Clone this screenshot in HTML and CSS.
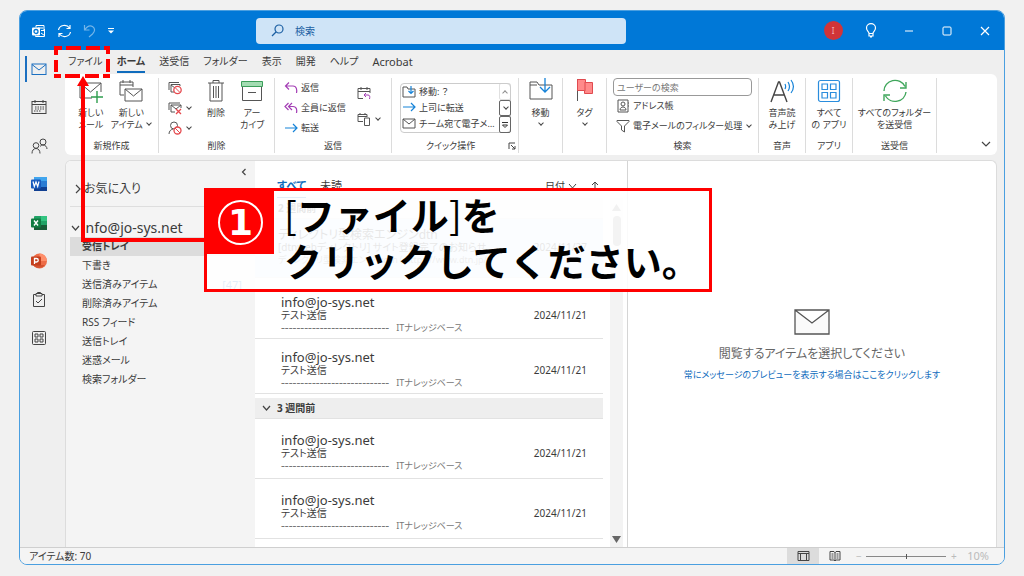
FILE: index.html
```html
<!DOCTYPE html>
<html lang="ja">
<head>
<meta charset="utf-8">
<title>受信トレイ</title>
<link rel="stylesheet" href="styles.css">
</head>
<body>
<div class="window">
  <header class="titlebar">
    <div class="quick">
      <svg class="app-icon" width="14" height="14" viewBox="0 0 14 14"><path d="M4 1.500h8v5M4 1.500v2M12.500 5v7.500h-9v-1M6 4h5M9 6.500h3M9 9l3.500 2.500" fill="none" stroke="#fff"/><rect x="0" y="3.500" width="8" height="8" rx="1" fill="#fff"/><circle cx="4" cy="7.500" r="2" fill="none" stroke="#0078d7" stroke-width="1.300"/></svg>
      <button class="bare" aria-label="すべて送受信"><svg width="15" height="14" viewBox="0 0 15 14" fill="none" stroke="#fff" stroke-width="1.200"><path d="M1.500 6a6 5.500 0 0 1 11-2M13 1v3.500H9.500M13.500 8a6 5.500 0 0 1-11 2M2 13V9.500h3.500"/></svg></button>
      <button class="bare dim" aria-label="元に戻す"><svg width="13" height="14" viewBox="0 0 13 14" fill="none" stroke="#fff" stroke-width="1.200"><path d="M1.500 1v5h5M1.500 6C4 2.500 7 1 9.500 2.500c3 2 2.500 5 0 7.500L6 13"/></svg></button>
      <button class="bare" aria-label="クイック アクセス ツール バーのカスタマイズ"><svg width="8" height="8" viewBox="0 0 8 8"><path d="M1 1.500h6" stroke="#fff"/><path d="M1 3.500h6L4 6.500z" fill="#fff"/></svg></button>
    </div>
    <label class="search">
      <svg width="13" height="13" viewBox="0 0 13 13" fill="none" stroke="#1b5fa3" stroke-width="1.200"><circle cx="8" cy="5" r="4"/><path d="M5 8L1 12"/></svg>
      <input type="search" placeholder="検索" aria-label="検索">
    </label>
    <div class="system">
      <button class="bare" aria-label="アカウント"><span class="avatar">I</span></button>
      <button class="bare" aria-label="ヒント"><svg width="12" height="15" viewBox="0 0 12 15" fill="none" stroke="#fff" stroke-width="1.200"><path d="M4 10.500C4 8.500 1.500 8 1.500 5a4.500 4.300 0 0 1 9 0c0 3-2.500 3.500-2.500 5.500zM4 10.500v2.500h4v-2.500M5 14h2"/></svg></button>
      <button class="bare" aria-label="最小化"><svg width="10" height="10" viewBox="0 0 10 10"><path d="M1 5h8" stroke="#fff"/></svg></button>
      <button class="bare" aria-label="最大化"><svg width="10" height="10" viewBox="0 0 10 10"><rect x="1" y="1" width="8" height="8" rx="1" fill="none" stroke="#fff"/></svg></button>
      <button class="bare" aria-label="閉じる"><svg width="10" height="10" viewBox="0 0 10 10"><path d="M1 1l8 8M9 1L1 9" stroke="#fff" stroke-width="1.200"/></svg></button>
    </div>
  </header>

  <div class="body">
    <nav class="rail" aria-label="アプリ">
      <button class="bare current" aria-label="メール"><svg width="16" height="16" viewBox="0 0 16 16" fill="none" stroke="#1b6fc0"><rect x="1" y="3" width="14" height="10.500"/><path d="M1 3.500l7 5.500 7-5.500"/></svg></button>
      <button class="bare" aria-label="予定表"><svg width="16" height="16" viewBox="0 0 16 16" fill="none" stroke="#444"><rect x="1" y="2.500" width="14" height="12"/><path d="M1 5.500h14M4 1v3M12 1v3"/><path d="M4 8h9M4 10h9M3 12h7" stroke-dasharray="1.500 1"/></svg></button>
      <button class="bare" aria-label="連絡先"><svg width="17" height="16" viewBox="0 0 17 16" fill="none" stroke="#444"><circle cx="5" cy="7.500" r="2.800"/><circle cx="12" cy="4" r="3"/><path d="M1 15.500c0-3 1.500-5 4-5s4 2 4 5M9 8.500c1-1 2-1.500 3-1.500 2.500 0 4 2 4 4"/></svg></button>
      <button class="bare" aria-label="Word"><svg width="18" height="16" viewBox="0 0 18 16"><rect x="4" y="1" width="13" height="14" rx="1" fill="#2b7cd3"/><path d="M4 1h13v4H4z" fill="#41a5ee"/><path d="M4 11h13v4H4z" fill="#103f91"/><rect x="1" y="3.500" width="10" height="9" rx="1" fill="#185abd"/><path d="M3 5.500l1.300 5L6 6l1.700 4.500 1.300-5" fill="none" stroke="#fff" stroke-width="1.200"/></svg></button>
      <button class="bare" aria-label="Excel"><svg width="18" height="16" viewBox="0 0 18 16"><rect x="4" y="1" width="13" height="14" rx="1" fill="#21a366"/><path d="M11 1h6v5h-6z" fill="#33c481"/><path d="M4 10h13v5H4z" fill="#185c37"/><rect x="1" y="3.500" width="10" height="9" rx="1" fill="#107c41"/><path d="M4 5.500l4 5M8 5.500l-4 5" stroke="#fff" stroke-width="1.400"/></svg></button>
      <button class="bare" aria-label="PowerPoint"><svg width="18" height="16" viewBox="0 0 18 16"><circle cx="9.500" cy="8" r="7.500" fill="#ed6c47"/><path d="M9.500.500A7.500 7.500 0 0 1 17 8H9.500z" fill="#ff8f6b"/><path d="M3 12h12a7.500 7.500 0 0 1-12 0z" fill="#d35230"/><rect x="1" y="3.500" width="10" height="9" rx="1" fill="#c43e1c"/><path d="M4.500 11V5.500h2a1.700 1.700 0 0 1 0 3.500h-2" fill="none" stroke="#fff" stroke-width="1.300"/></svg></button>
      <button class="bare" aria-label="タスク"><svg width="14" height="16" viewBox="0 0 14 16" fill="none" stroke="#444"><path d="M4 2.500H1.500v12h11v-12H10M4 1.500h6v2.500H4zM5.500 1.500v-1h3v1M4 9l2 2 4-4"/></svg></button>
      <button class="bare" aria-label="その他のアプリ"><svg width="16" height="16" viewBox="0 0 16 16" fill="none" stroke="#444"><rect x="1.500" y="1.500" width="13" height="13" rx="1"/><path d="M4 4h3v3H4zM9 4h3v3H9zM4 9h3v3H4zM9 9h3v3H9z"/></svg></button>
    </nav>

    <main class="main">
      <nav class="tabs" aria-label="リボン">
        <button class="tab">ファイル</button><button class="tab active">ホーム</button><button class="tab">送受信</button><button class="tab">フォルダー</button><button class="tab">表示</button><button class="tab">開発</button><button class="tab">ヘルプ</button><button class="tab latin">Acrobat</button>
      </nav>

      <div class="ribbon">
        <section class="group g-new">
          <div class="tools">
            <button class="big"><svg width="26" height="26" viewBox="0 0 26 26" fill="none" stroke="#555"><path d="M14 20H2V5h21v9M2 5l10.500 9L23 5"/><path d="M19 13v12M13 19h12" stroke="#2f9e4f" stroke-width="1.400"/></svg><span>新しい<br>メール</span></button>
            <button class="big"><svg width="26" height="26" viewBox="0 0 26 26" fill="none" stroke="#555"><path d="M6 17H2V4h13v5M2 7h13M5 2v3M12 2v3"/><path d="M7 11h17v12H7zM7 11l8.500 7 8.500-7" fill="#fff"/></svg><span>新しい<br>アイテム <i class="chev"></i></span></button>
          </div>
          <h2>新規作成</h2>
        </section>
        <section class="group g-delete">
          <div class="tools">
            <div class="stack icons">
              <button class="row" aria-label="無視"><svg width="14" height="14" viewBox="0 0 14 14" fill="none" stroke="#555"><path d="M1 9V1.500h10M6 11H3V3.500h9V5M3 4l4 3"/><circle cx="9.500" cy="9" r="3.700" stroke="#e5484d" fill="#fff" stroke-width="1.300"/><path d="M7 6.500l5 5" stroke="#e5484d"/></svg></button>
              <button class="row" aria-label="クリーンアップ"><svg width="14" height="14" viewBox="0 0 14 14" fill="none" stroke="#555"><path d="M1 9V2h11M7 11H3V4h10v3M3 4l5 4 5-4"/><path d="M8 8l5 5M13 8l-5 5" stroke="#e5484d" stroke-width="1.300"/></svg><i class="chev"></i></button>
              <button class="row" aria-label="迷惑メール"><svg width="14" height="14" viewBox="0 0 14 14" fill="none" stroke="#555"><circle cx="6" cy="4.500" r="3.500"/><path d="M1 13c0-3 2-4.500 4-5"/><circle cx="9.500" cy="9.500" r="3.500" stroke="#e5484d" fill="#fff" stroke-width="1.300"/><path d="M7 7l5 5" stroke="#e5484d"/></svg><i class="chev"></i></button>
            </div>
            <button class="big narrow"><svg width="26" height="26" viewBox="0 0 26 26" fill="none" stroke="#555"><path d="M5 5h16M10 5V2.500h6V5M7 5v18h12V5M10.500 8v12M13 8v12M15.500 8v12"/></svg><span>削除</span></button>
            <button class="big narrow"><svg width="26" height="26" viewBox="0 0 26 26"><path d="M3.500 8v14.500h19V8M9 14.500h8" fill="none" stroke="#555"/><path d="M2.500 3.500h21v5h-21z" fill="#a3dcb2" stroke="#3c9e5a"/></svg><span>アー<br>カイブ</span></button>
          </div>
          <h2>削除</h2>
        </section>
        <section class="group g-reply">
          <div class="tools">
            <div class="stack">
              <button class="row"><svg width="14" height="14" viewBox="0 0 14 14" fill="none" stroke="#a43fb5" stroke-width="1.200"><path d="M5 1.500L1.500 5 5 8.500M1.500 5H9c4 0 4 4.500 3.500 7"/></svg>返信</button>
              <button class="row"><svg width="14" height="14" viewBox="0 0 14 14" fill="none" stroke="#a43fb5" stroke-width="1.200"><path d="M4.500 2L1 5.500 4.500 9M8 2L4.500 5.500 8 9M4.500 5.500H9c4 0 4 4 3.500 6.500"/></svg>全員に返信</button>
              <button class="row"><svg width="14" height="14" viewBox="0 0 14 14" fill="none" stroke="#1683d8" stroke-width="1.200"><path d="M1 7h12M9 3l4 4-4 4"/></svg>転送</button>
            </div>
            <div class="stack pair">
              <button class="row" aria-label="会議"><svg width="14" height="14" viewBox="0 0 14 14" fill="none" stroke="#555"><path d="M6 12.500H1v-10h12V7M1 5.500h12M4 1v3M10 1v3"/><path d="M9 7L7 9l2 2M7 9h4c2 0 2 2 1.500 4" stroke="#a43fb5"/></svg></button>
              <button class="row" aria-label="その他"><svg width="14" height="14" viewBox="0 0 14 14" fill="none" stroke="#555"><path d="M6 9.500H1v-7h9V5M1 4.500h9M3 1v2M8 1v2M7.500 6h5v7.500h-5z"/></svg><i class="chev"></i></button>
            </div>
          </div>
          <h2>返信</h2>
        </section>
        <section class="group g-steps">
          <div class="gallery">
            <div class="choices">
              <button class="row"><svg width="14" height="14" viewBox="0 0 14 14" fill="none" stroke="#555"><path d="M1 12V2h4l1 2h7v8z"/><path d="M9 1v7M6.500 6L9 8.500 11.500 6" stroke="#1683d8" stroke-width="1.200"/></svg>移動: ？</button>
              <button class="row"><svg width="14" height="14" viewBox="0 0 14 14" fill="none" stroke="#1683d8" stroke-width="1.200"><path d="M1 6h12M9 2l4 4-4 4"/></svg>上司に転送</button>
              <button class="row"><svg width="14" height="14" viewBox="0 0 14 14" fill="none" stroke="#555"><path d="M1 2h12v9H1zM1 2l6 5 6-5"/></svg>チーム宛て電子メ…</button>
            </div>
            <div class="spin">
              <button class="faint" aria-label="上へ"><i class="chev up"></i></button>
              <button aria-label="下へ"><i class="chev"></i></button>
              <button aria-label="その他"><svg width="8" height="8" viewBox="0 0 8 8" fill="none" stroke="#333"><path d="M1 1.500h6M1.500 4L4 6.500 6.500 4z"/></svg></button>
            </div>
          </div>
          <h2>クイック操作 <svg class="launcher" width="8" height="8" viewBox="0 0 8 8" fill="none" stroke="#444"><path d="M1 7V1h6M3 3l4 4M7 4v3H4"/></svg></h2>
        </section>
        <section class="group g-move">
          <div class="tools"><button class="big"><svg width="26" height="26" viewBox="0 0 26 26" fill="none" stroke="#555"><path d="M2 21V4h7l2 3h13v14zM2 7h7"/><path d="M17 0v13M12 9l5 5 5-5" stroke="#1683d8" stroke-width="1.300"/></svg><span>移動<br><i class="chev"></i></span></button></div>
        </section>
        <section class="group g-tag">
          <div class="tools"><button class="big"><svg width="26" height="26" viewBox="0 0 26 26"><path d="M5.500 1v22" stroke="#555"/><path d="M5.500 1.500h8v3h7v11h-8v-3h-7z" fill="#ff8a8a" stroke="#e04a4f"/><path d="M13 4v9" stroke="#e04a4f"/></svg><span>タグ<br><i class="chev"></i></span></button></div>
        </section>
        <section class="group g-find">
          <div class="stack">
            <input class="people" type="text" placeholder="ユーザーの検索" aria-label="ユーザーの検索">
            <button class="row"><svg width="14" height="14" viewBox="0 0 14 14" fill="none" stroke="#555"><path d="M2 1h10v12H2z"/><circle cx="7" cy="5" r="2"/><path d="M4 11c0-4 6-4 6 0zM12 4h1M12 7h1"/></svg>アドレス帳</button>
            <button class="row"><svg width="14" height="14" viewBox="0 0 14 14" fill="none" stroke="#555"><path d="M1 1.500h12v1L8.500 7v6l-3-2V7L1 2.500z"/></svg>電子メールのフィルター処理 <i class="chev"></i></button>
          </div>
          <h2>検索</h2>
        </section>
        <section class="group g-voice">
          <div class="tools"><button class="big"><svg width="26" height="26" viewBox="0 0 26 26" fill="none"><path d="M2 24L9.500 4h1L18 24M5 17h10" stroke="#444" stroke-width="1.400"/><path d="M16 6c1 2 1 3 0 5M19 4c2 3 2 6 0 9M22 2c3 4 3 9 0 13" stroke="#1683d8" stroke-width="1.200"/></svg><span>音声読<br>み上げ</span></button></div>
          <h2>音声</h2>
        </section>
        <section class="group g-apps">
          <div class="tools"><button class="big"><svg width="26" height="26" viewBox="0 0 26 26" fill="none" stroke="#2a8ddd" stroke-width="1.200"><rect x="2.500" y="2.500" width="21" height="21" rx="2"/><path d="M6 6h5.500v5.500H6zM14.500 6H20v5.500h-5.500zM6 14.500h5.500V20H6zM14.500 14.500H20V20h-5.500z"/></svg><span>すべて<br>の アプリ</span></button></div>
          <h2>アプリ</h2>
        </section>
        <section class="group g-sync">
          <div class="tools"><button class="big"><svg width="26" height="26" viewBox="0 0 26 26" fill="none" stroke="#3fa65b" stroke-width="1.400"><path d="M2 13A11 10.500 0 0 1 23 8.500M24 4v6h-6M24 14A11 10.500 0 0 1 3.500 18M2 23v-6h6"/></svg><span>すべてのフォルダー<br>を送受信</span></button></div>
          <h2>送受信</h2>
        </section>
        <button class="collapse bare" aria-label="リボンの折りたたみ"><svg width="10" height="10" viewBox="0 0 10 10" fill="none" stroke="#444" stroke-width="1.200"><path d="M1 3l4 4 4-4"/></svg></button>
      </div>

      <div class="content">
        <aside class="folders">
          <button class="fold bare" aria-label="折りたたむ"><svg width="6" height="8" viewBox="0 0 6 8" fill="none" stroke="#444" stroke-width="1.200"><path d="M4.500 1l-3 3 3 3"/></svg></button>
          <button class="root fav"><svg width="8" height="10" viewBox="0 0 8 10" fill="none" stroke="#444" stroke-width="1.200"><path d="M2 1l4 4-4 4"/></svg>お気に入り</button>
          <button class="root account"><svg width="9" height="8" viewBox="0 0 9 8" fill="none" stroke="#444" stroke-width="1.200"><path d="M1 2l3.500 4L8 2"/></svg>info@jo-sys.net</button>
          <ul class="tree">
            <li class="selected"><a href="#inbox">受信トレイ</a></li>
            <li><a href="#drafts">下書き</a></li>
            <li><a href="#sent">送信済みアイテム</a><span class="count">[47]</span></li>
            <li><a href="#deleted">削除済みアイテム</a></li>
            <li><a href="#rss">RSS フィード</a></li>
            <li><a href="#outbox">送信トレイ</a></li>
            <li><a href="#junk">迷惑メール</a></li>
            <li><a href="#search">検索フォルダー</a></li>
          </ul>
        </aside>

        <section class="list">
          <div class="filter">
            <button class="bare all">すべて</button>
            <button class="bare">未読</button>
            <button class="bare sort">日付 <svg width="9" height="8" viewBox="0 0 9 8" fill="none" stroke="#444"><path d="M1 2l3.500 4L8 2"/></svg></button>
            <button class="bare" aria-label="昇順"><svg width="8" height="10" viewBox="0 0 8 10" fill="none" stroke="#444"><path d="M4 9V1M1 4l3-3 3 3"/></svg></button>
          </div>
          <div class="scroller">
            <div class="messages">
              <h3 class="week plain">2 週間前</h3>
              <article class="mail picked"><b>ディレクトリ型検索エンジンdtn</b><p>[dtnwebディレクトリ] サイト登録完了のお知らせ</p><time>2024/11/27</time><small>ディレクトリ型検索エンジンdtn（ https://www.dtn.jp/ ）</small></article>
              <div class="set">
                <article class="mail"><b>info@jo-sys.net</b><p>テスト送信</p><time>2024/11/21</time><small><span class="dashes">----------------------------</span>ITナレッジベース</small></article>
                <article class="mail"><b>info@jo-sys.net</b><p>テスト送信</p><time>2024/11/21</time><small><span class="dashes">----------------------------</span>ITナレッジベース</small></article>
              </div>
              <h3 class="week"><svg width="9" height="8" viewBox="0 0 9 8" fill="none" stroke="#444" stroke-width="1.200"><path d="M1 2l3.500 4L8 2"/></svg>3 週間前</h3>
              <div class="set roomy">
                <article class="mail"><b>info@jo-sys.net</b><p>テスト送信</p><time>2024/11/21</time><small><span class="dashes">----------------------------</span>ITナレッジベース</small></article>
                <article class="mail"><b>info@jo-sys.net</b><p>テスト送信</p><time>2024/11/21</time><small><span class="dashes">----------------------------</span>ITナレッジベース</small></article>
              </div>
            </div>
            <div class="bar" aria-hidden="true">
              <svg width="9" height="7" viewBox="0 0 9 7"><path d="M4.500 0L9 7H0z" fill="#888"/></svg>
              <div class="thumb"></div>
              <svg class="down" width="9" height="7" viewBox="0 0 9 7"><path d="M0 0h9L4.500 7z" fill="#666"/></svg>
            </div>
          </div>
        </section>

        <section class="reading">
          <svg width="36" height="26" viewBox="0 0 36 26"><path d="M1 1h34v24H1zM1 1l17 13L35 1" fill="#fafafa" stroke="#555" stroke-width="1.300"/></svg>
          <p>閲覧するアイテムを選択してください</p>
          <a href="#preview">常にメッセージのプレビューを表示する場合はここをクリックします</a>
        </section>
      </div>
    </main>
  </div>

  <footer class="status">
    <span class="items">アイテム数: 70</span>
    <button class="view on" aria-label="標準"><svg width="13" height="12" viewBox="0 0 13 12" fill="none" stroke="#444"><path d="M1 1.500h11v9H1zM1 3.500h11M3.500 3.500v7M9.500 3.500v7"/></svg></button>
    <button class="view" aria-label="閲覧"><svg width="12" height="12" viewBox="0 0 12 12" fill="none" stroke="#444"><path d="M1 1.500h4l1 1 1-1h4v8.500H7l-1 1-1-1H1zM6 2v9M2.500 4h2M2.500 6h2M2.500 8h2M7.500 4h2M7.500 6h2M7.500 8h2"/></svg></button>
    <span class="pm">−</span>
    <input class="zoom" type="range" min="0" max="100" value="50" disabled aria-label="ズーム">
    <span class="pm">+</span>
    <span class="percent">10%</span>
  </footer>

  <svg class="pointer" width="160" height="204" viewBox="0 0 160 204" fill="none" stroke="#f00" stroke-width="4" aria-hidden="true"><path d="M17 5H11v7M11 17v12M21 5h15M41 5h14M59 5h4v6M63 16v13M16 33H9M20 33h15M40 33h14M58 33h7"/><path d="M38 42v155h122"/><path d="M38 33l6 10H32z" fill="#f00" stroke="none"/></svg>
  <aside class="callout">
    <div class="step"><span>1</span></div>
    <p>[<b>ファイル</b>]<b>を<br>クリックしてください。</b></p>
  </aside>
</div>
</body>
</html>
```
FILE: styles.css
```css
* { box-sizing: border-box; }
body {
  margin: 0;
  padding: 10px 19px 11px;
  height: 100vh;
  background: #f1f1f1;
  color: #3b3b3b;
  font-family: "Noto Sans", "Noto Sans CJK JP", sans-serif;
  font-size: 10px;
  line-height: 14px;
  font-feature-settings: "palt";
}
button, input { font: inherit; font-feature-settings: inherit; color: inherit; margin: 0; }
button { padding: 0; border: 0; background: none; white-space: nowrap; }
svg { display: block; flex: none; }
h2, h3, p, ul { margin: 0; padding: 0; font-weight: 400; }
a { color: inherit; text-decoration: none; }
.bare { display: flex; align-items: center; justify-content: center; }

.window {
  position: relative;
  height: 100%;
  display: flex;
  flex-direction: column;
  border: 1px solid #4a9fe0;
  border-radius: 8px;
  background: #efefef;
}

.titlebar {
  flex: none;
  height: 39px;
  display: grid;
  grid-template-columns: 236px minmax(200px, 370px) 1fr;
  align-items: center;
  background: #0078d7;
  border-radius: 7px 7px 0 0;
}
.quick { display: flex; align-items: center; gap: 11px; padding-left: 12px; }
.dim { opacity: .45; }
.search {
  display: flex;
  align-items: center;
  gap: 9px;
  height: 26px;
  padding: 0 15px;
  background: #cfe4f7;
  border-radius: 4px;
}
.search input { flex: 1; min-width: 0; border: 0; outline: 0; background: none; }
.search input::placeholder { color: #1b5fa3; opacity: 1; }
.system { display: flex; justify-content: flex-end; align-items: center; }
.system .bare { width: 38px; height: 30px; }
.avatar { width: 19px; height: 19px; border-radius: 50%; background: #d13438; color: #f3b5b7; font-size: 8px; line-height: 19px; }

.body { flex: 1; min-height: 0; display: flex; }
.rail {
  flex: none;
  width: 45px;
  height: 301px;
  padding-top: 6px;
  display: flex;
  flex-direction: column;
  justify-content: space-between;
}
.rail .bare { height: 26px; margin: 0 14px 0 5px; border-left: 2px solid transparent; }
.rail .current { border-color: #1b6fc0; }

.main { flex: 1; min-width: 0; display: flex; flex-direction: column; padding-right: 7px; }
.tabs { flex: none; height: 24px; display: flex; align-items: flex-end; gap: 14px; padding: 0 3px 1px; }
.tab { height: 21px; line-height: 19px; border-bottom: 2px solid transparent; }
.tab.active { font-weight: 700; border-color: #0f6cbd; }
.tab.latin { font-size: 11px; }

.ribbon {
  flex: none;
  height: 81px;
  display: flex;
  padding: 4px 0 2px;
  background: #fff;
  border-radius: 6px;
  font-size: 9px;
  line-height: 12px;
}
.group { flex: none; display: flex; flex-direction: column; justify-content: space-between; border-right: 1px solid #dcdcdc; }
.group h2 { font-size: 9px; line-height: 14px; text-align: center; }
.g-new { width: 94px; }
.g-new .tools { padding: 0 6px; }
.g-delete { width: 116px; }
.g-reply { width: 117px; }
.g-steps { width: 127px; padding-left: 8px; padding-top: 5px; }
.g-move { width: 44px; }
.g-tag { width: 44px; }
.g-find { width: 152px; padding: 0 6px; }
.g-voice { width: 47px; }
.g-apps { width: 47px; }
.g-sync { width: 84px; }
.tools { display: flex; justify-content: center; }
.big { flex: 1; display: flex; flex-direction: column; align-items: center; gap: 3px; }
.narrow { flex: none; width: 36px; }
.row { display: flex; align-items: center; gap: 3px; height: 20px; }
.stack { display: flex; flex-direction: column; align-items: flex-start; }
.g-delete .tools { justify-content: flex-end; padding-right: 4px; }
.icons { flex: 1; padding-left: 9px; }
.g-reply .tools { justify-content: flex-start; padding-left: 9px; gap: 11px; }
.pair { padding-top: 5px; gap: 6px; }
.chev {
  display: inline-block;
  width: 4px;
  height: 4px;
  margin: 0 1px 3px 2px;
  border: solid #444;
  border-width: 0 1px 1px 0;
  transform: rotate(45deg);
}
.chev.up { transform: rotate(225deg); margin: 3px 0 0; }
.gallery { display: flex; width: 111px; height: 50px; border: 1px solid #ccc; border-radius: 4px; }
.choices { flex: 1; min-width: 0; padding-left: 1px; }
.choices .row { height: 16px; }
.spin { width: 12px; display: flex; flex-direction: column; margin: -1px -1px -1px 0; }
.spin button { flex: 1; display: flex; align-items: center; justify-content: center; border: 1px solid #666; border-radius: 2px; }
.spin .faint { border-color: #ccc; opacity: .6; }
.g-steps h2 { display: flex; justify-content: space-between; align-items: center; padding-left: 26px; padding-right: 2px; }
.people { width: 100%; height: 18px; padding: 0 3px; border: 1px solid #999; border-radius: 4px; background: #fff; }
.people::placeholder { color: #777; opacity: 1; }
.g-find .row { margin-left: 3px; }
.collapse { margin: auto 6px 4px auto; }

.content {
  flex: 1;
  min-height: 0;
  display: flex;
  margin-top: 5px;
  background: #fff;
  border: solid #dcdcdc;
  border-width: 1px 1px 0 1px;
  border-radius: 6px 6px 0 0;
  overflow: hidden;
}
.folders { flex: none; width: 189px; padding-left: 4px; background: #f4f4f4; display: flex; flex-direction: column; }
.fold { align-self: flex-end; width: 22px; height: 14px; margin-top: 4px; }
.root { display: flex; align-items: center; gap: 2px; text-align: left; }
.fav { height: 28px; padding-left: 4px; padding-bottom: 8px; font-size: 12px; border-bottom: 1px solid #dedede; }
.account { height: 30px; padding-left: 1px; padding-top: 11px; font-size: 14px; }
.tree { list-style: none; }
.tree li { display: flex; justify-content: space-between; height: 19px; line-height: 19px; padding: 0 13px 0 12px; }
.tree .selected { background: #dcdcdc; font-weight: 700; }
.count { color: #1b6fc0; font-size: 11px; }

.list { flex: none; width: 373px; display: flex; flex-direction: column; border-right: 1px solid #d5d5d5; }
.filter { display: flex; align-items: center; gap: 14px; height: 37px; padding: 13px 28px 0 22px; font-size: 11px; }
.all { height: 24px; color: #0f6cbd; font-weight: 700; border-bottom: 1px solid #0f6cbd; }
.sort { margin-left: auto; gap: 3px; font-size: 10px; }
.scroller { flex: 1; min-height: 0; display: flex; justify-content: space-between; padding-right: 4px; }
.messages { width: 348px; overflow: hidden; }
.week { display: flex; align-items: center; gap: 6px; height: 21px; padding-left: 7px; font-size: 10px; font-weight: 700; background: #eee; border-bottom: 1px solid #e2e2e2; }
.week.plain { padding-left: 23px; background: #f6f6f6; }
.set { padding: 6px 0 4px; }
.mail {
  display: grid;
  grid-template-columns: 1fr auto;
  align-content: start;
  height: 55px;
  padding: 12px 16px 0 26px;
  border-bottom: 1px solid #e2e2e2;
}
.mail b { grid-column: 1 / 3; font-size: 13px; line-height: 13px; font-weight: 400; }
.mail p, .mail time { line-height: 12px; }
.mail small { grid-column: 1 / 3; display: flex; align-items: center; gap: 7px; font-size: 9px; line-height: 14px; color: #777; white-space: nowrap; }
.dashes { font-size: 12px; }
.picked { height: 59px; padding-top: 9px; padding-left: 23px; background: #d9eafa; }
.picked b { font-size: 12px; }
.roomy { padding: 0; }
.roomy .mail { height: 60px; padding-top: 15px; }
.bar { width: 13px; display: flex; flex-direction: column; align-items: center; gap: 5px; padding: 6px 0 4px; background: #f3f3f3; }
.thumb { width: 8px; height: 30px; border-radius: 4px; background: #999; }
.down { margin-top: auto; }

.reading { flex: 1; min-width: 0; display: flex; flex-direction: column; align-items: center; padding-top: 148px; }
.reading p { margin-top: 9px; font-size: 12px; line-height: 20px; color: #666; }
.reading a { margin-top: 4px; font-size: 9px; line-height: 14px; color: #0f6cbd; }

.status {
  flex: none;
  height: 17px;
  display: flex;
  align-items: center;
  padding: 0 15px 0 9px;
  border-top: 1px solid #cfcfcf;
  border-radius: 0 0 7px 7px;
  background: #f4f4f4;
}
.items { margin-right: auto; }
.view { width: 32px; height: 16px; display: flex; align-items: center; justify-content: center; }
.view.on { background: #dcdcdc; }
.pm { width: 15px; text-align: center; color: #bbb; }
.zoom { appearance: none; width: 80px; height: 1px; background: #888; outline: 0; }
.zoom::-webkit-slider-thumb { appearance: none; width: 1px; height: 5px; background: #555; }
.percent { margin-left: 6px; color: #bbb; font-size: 11px; }

.pointer { position: absolute; left: 25px; top: 32px; }
.callout {
  position: absolute;
  left: 184px;
  top: 177px;
  display: flex;
  align-items: flex-start;
  width: 508px;
  height: 104px;
  border: 3px solid #f00;
  background: rgba(255, 255, 255, .88);
  color: #000;
}
.step { width: 67px; height: 63px; display: grid; place-items: center; background: #f00; }
.step span { width: 45px; height: 45px; border: 2px solid #fff; border-radius: 50%; color: #fff; font-family: "DejaVu Sans", sans-serif; font-size: 36px; font-weight: 700; line-height: 41px; text-align: center; }
.callout p { padding-left: 10px; font-family: "Noto Sans CJK JP", sans-serif; font-size: 38px; line-height: 46px; font-feature-settings: normal; white-space: nowrap; }
```
